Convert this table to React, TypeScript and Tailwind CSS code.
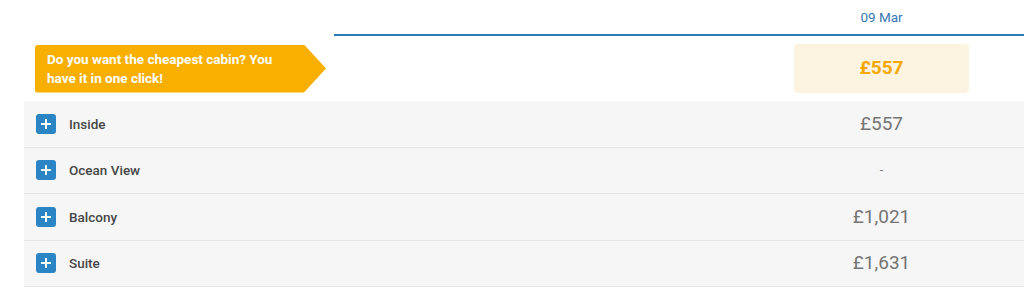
import React from "react";

const cabins = [
  { name: "Inside", price: "£557" },
  { name: "Ocean View", price: "-" },
  { name: "Balcony", price: "£1,021" },
  { name: "Suite", price: "£1,631" },
];

function PlusIcon() {
  return (
    <span className="flex h-[20px] w-[20px] shrink-0 items-center justify-center rounded-[3px] bg-[#2b84c3]">
      <svg width="12" height="12" viewBox="0 0 12 12">
        <path d="M6 1v10M1 6h10" stroke="#fff" strokeWidth="2" />
      </svg>
    </span>
  );
}

export default function App() {
  return (
    <div className="h-[303px] w-[1024px] bg-white font-['Roboto',sans-serif]">
      <div className="pl-[334px]">
        <div className="flex h-[36px] items-center border-b-2 border-[#2a7cb9]">
          <div className="flex-1" />
          <div className="w-[175px] text-center text-[13.5px] text-[#3577b3]">09 Mar</div>
          <div className="w-[55px]" />
        </div>
      </div>

      <div className="flex h-[65px] items-center pl-[35px]">
        <div className="flex h-[48px] w-[291px] items-center rounded-l-[3px] bg-[#f8af00] pl-[12px] [clip-path:polygon(0_0,269px_0,100%_50%,269px_100%,0_100%)]">
          <p className="w-[250px] text-[13.5px] font-bold leading-[19px] text-white">
            Do you want the cheapest cabin? You have it in one click!
          </p>
        </div>
        <div className="flex-1" />
        <div className="flex h-[49px] w-[175px] items-center justify-center rounded-[4px] bg-[#fdf3e1] text-[19px] font-bold text-[#f5a800]">
          £557
        </div>
        <div className="w-[55px]" />
      </div>

      <div className="ml-[24px] bg-[#f6f6f6]">
        {cabins.map((c) => (
          <div key={c.name} className="flex h-[46.5px] items-center border-b border-[#e6e6e6] pl-[12px]">
            <PlusIcon />
            <span className="ml-[13px] flex-1 text-[13.5px] font-medium text-[#474747]">{c.name}</span>
            <span
              className={
                c.price === "-"
                  ? "w-[175px] text-center text-[12px] text-[#777]"
                  : "w-[175px] text-center text-[19px] text-[#757575]"
              }
            >
              {c.price}
            </span>
            <div className="w-[55px]" />
          </div>
        ))}
      </div>
    </div>
  );
}
